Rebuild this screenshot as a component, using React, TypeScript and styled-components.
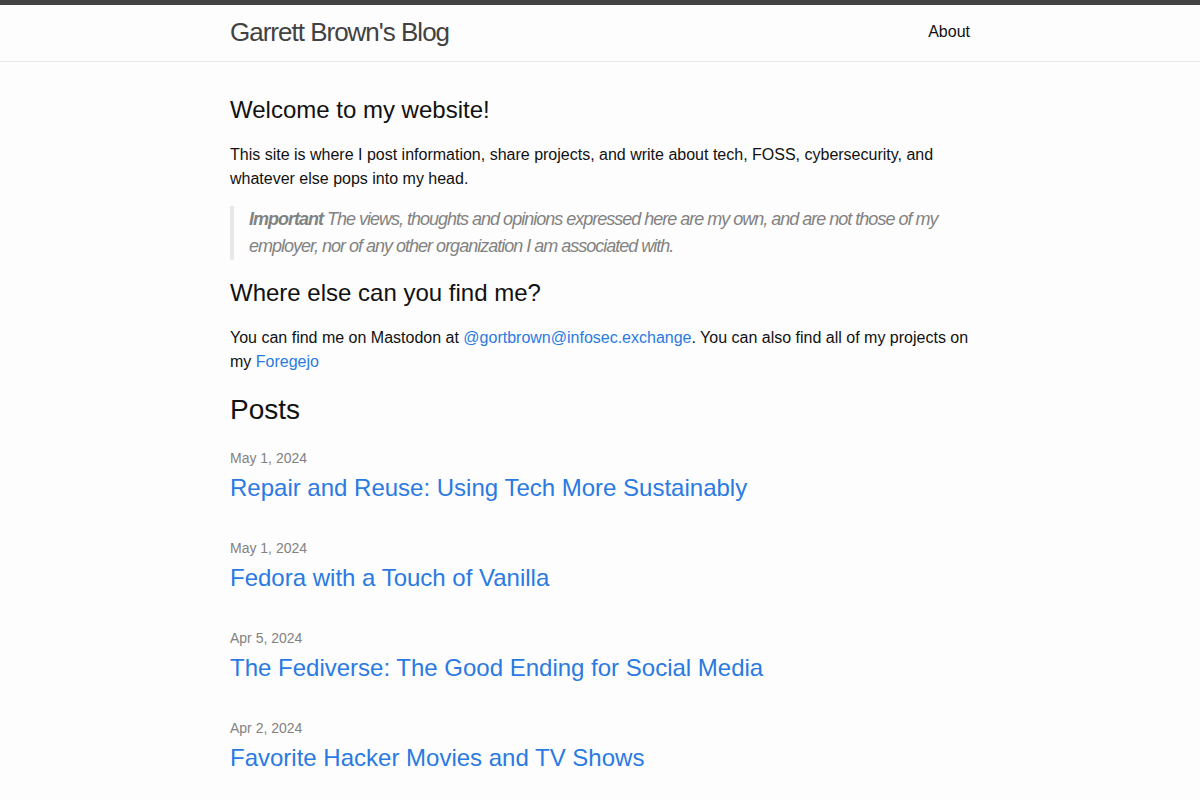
import React from 'react';
import styled, { createGlobalStyle } from 'styled-components';

const GlobalStyle = createGlobalStyle`
  * { box-sizing: border-box; }
  body {
    margin: 0;
    background: #fdfdfd;
    color: #111111;
    font-family: 'Liberation Sans', Helvetica, Arial, sans-serif;
    font-size: 16px;
    line-height: 1.5;
  }
  a { color: #2a7ae2; text-decoration: none; }
`;

const Header = styled.header`
  border-top: 5px solid #424242;
  border-bottom: 1px solid #e8e8e8;
  min-height: 62px;
`;

const Wrapper = styled.div`
  max-width: 800px;
  margin: 0 auto;
  padding: 0 30px;
`;

const HeaderInner = styled(Wrapper)`
  display: flex;
  justify-content: space-between;
  align-items: center;
`;

const SiteTitle = styled.a`
  font-size: 26px;
  font-weight: 300;
  letter-spacing: -1px;
  line-height: 54px;
  color: #424242;
`;

const NavLink = styled.a`
  color: #111111;
  line-height: 54px;
`;

const Main = styled.main`
  padding: 30px 0;
`;

const Heading = styled.h2<{ $size?: number }>`
  margin: 0 0 15px;
  font-weight: 400;
  font-size: ${(p) => p.$size ?? 24}px;
`;

const Para = styled.p`
  margin: 0 0 15px;
`;

const Quote = styled.blockquote`
  margin: 0 0 15px;
  color: #828282;
  border-left: 4px solid #e8e8e8;
  padding-left: 15px;
  font-size: 18px;
  letter-spacing: -1px;
  font-style: italic;
  p { margin: 0; }
`;

const PostList = styled.ul`
  list-style: none;
  margin: 0;
  padding: 0;
`;

const PostItem = styled.li`
  margin-bottom: 30px;
`;

const PostMeta = styled.span`
  font-size: 14px;
  color: #828282;
`;

const PostTitle = styled.h3`
  margin: 0 0 15px;
  font-weight: 400;
  a {
    display: block;
    font-size: 24px;
  }
`;

const posts = [
  { date: 'May 1, 2024', title: 'Repair and Reuse: Using Tech More Sustainably' },
  { date: 'May 1, 2024', title: 'Fedora with a Touch of Vanilla' },
  { date: 'Apr 5, 2024', title: 'The Fediverse: The Good Ending for Social Media' },
  { date: 'Apr 2, 2024', title: 'Favorite Hacker Movies and TV Shows' },
  { date: 'Mar 20, 2024', title: 'Self-Hosting on a Budget' },
];

export default function App() {
  return (
    <>
      <GlobalStyle />
      <Header>
        <HeaderInner>
          <SiteTitle href="#">Garrett Brown's Blog</SiteTitle>
          <NavLink href="#">About</NavLink>
        </HeaderInner>
      </Header>
      <Main>
        <Wrapper>
          <Heading>Welcome to my website!</Heading>
          <Para>
            This site is where I post information, share projects, and write about tech, FOSS,
            cybersecurity, and whatever else pops into my head.
          </Para>
          <Quote>
            <p>
              <strong>Important</strong> The views, thoughts and opinions expressed here are my
              own, and are not those of my employer, nor of any other organization I am associated
              with.
            </p>
          </Quote>
          <Heading>Where else can you find me?</Heading>
          <Para>
            You can find me on Mastodon at <a href="#">@gortbrown@infosec.exchange</a>. You can
            also find all of my projects on my <a href="#">Foregejo</a>
          </Para>
          <Heading $size={28}>Posts</Heading>
          <PostList>
            {posts.map((post) => (
              <PostItem key={post.title}>
                <PostMeta>{post.date}</PostMeta>
                <PostTitle>
                  <a href="#">{post.title}</a>
                </PostTitle>
              </PostItem>
            ))}
          </PostList>
        </Wrapper>
      </Main>
    </>
  );
}
